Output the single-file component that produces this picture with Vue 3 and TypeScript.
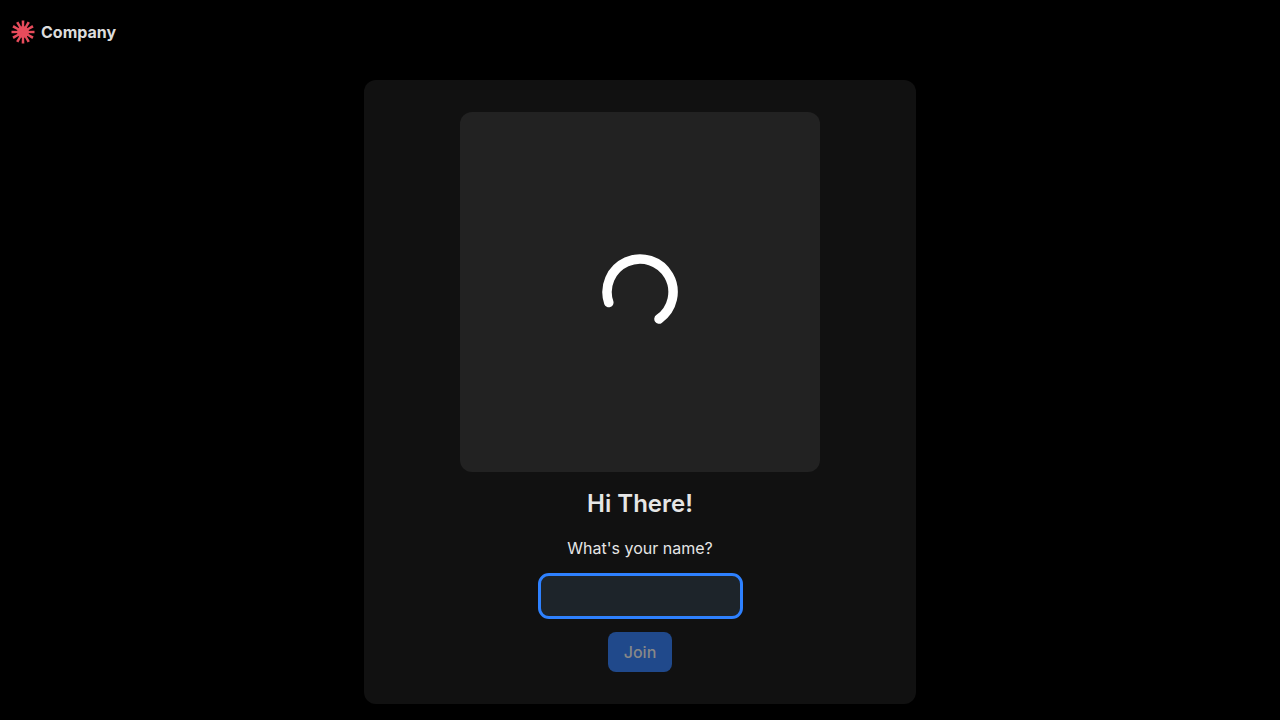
<script setup lang="ts">
import { computed, ref } from 'vue'

const name = ref('')
const canJoin = computed(() => name.value.trim().length > 0)
const spokes = Array.from({ length: 12 }, (_, i) => i * 30)
</script>

<template>
  <div class="page">
    <header class="topbar">
      <svg class="mark" viewBox="-12 -12 24 24" aria-hidden="true">
        <circle r="6" />
        <path
          v-for="angle in spokes"
          :key="angle"
          d="M-1 0 L-1.3 -11.5 H1.3 L1 0 Z"
          :transform="`rotate(${angle})`"
        />
      </svg>
      <span class="brand">Company</span>
    </header>

    <main class="content">
      <form class="card" @submit.prevent>
        <div class="preview" role="status" aria-live="polite">
          <svg class="spinner" viewBox="-40 -40 80 80" aria-hidden="true">
            <path d="M-31.2 10.6 A33 33 0 1 1 19 27" />
          </svg>
        </div>
        <h1>Hi There!</h1>
        <label for="name">What's your name?</label>
        <input id="name" v-model="name" type="text" autocomplete="off" />
        <button type="submit" :disabled="!canJoin">Join</button>
      </form>
    </main>
  </div>
</template>

<style>
html,
body {
  background: #000;
}
</style>

<style scoped>
.page {
  min-height: 100vh;
  box-sizing: border-box;
  background: #000;
  color: #e6e6e6;
  font-family: Inter, "Liberation Sans", sans-serif;
  font-size: 16px;
  line-height: 24px;
}

.topbar {
  display: flex;
  align-items: center;
  gap: 6px;
  height: 64px;
  padding: 0 11px;
}

.mark {
  width: 24px;
  height: 24px;
  fill: #e84c5c;
}

.brand {
  font-size: 16px;
  font-weight: 700;
  color: #dcdcdc;
}

.content {
  display: flex;
  justify-content: center;
  padding: 16px;
}

.card {
  display: flex;
  flex-direction: column;
  align-items: center;
  padding: 32px 96px;
  border-radius: 12px;
  background: #111;
}

.preview {
  display: flex;
  align-items: center;
  justify-content: center;
  width: 360px;
  max-width: 100%;
  aspect-ratio: 1;
  border-radius: 12px;
  background: #222;
}

.spinner {
  width: 80px;
  height: 80px;
  fill: none;
  stroke: #fff;
  stroke-width: 9.5;
  stroke-linecap: round;
}

h1 {
  margin: 16px 0;
  font-size: 24px;
  font-weight: 600;
  line-height: 32px;
}

label {
  margin-bottom: 16px;
}

input {
  box-sizing: border-box;
  width: 199px;
  height: 40px;
  margin-bottom: 16px;
  padding: 8px;
  border: 0;
  border-radius: 8px;
  outline: 3px solid #2e81ff;
  background: #1d242a;
  color: inherit;
  font: inherit;
}

button {
  height: 40px;
  padding: 0 16px;
  border: 0;
  border-radius: 8px;
  background: #2e81ff;
  color: #ededed;
  font: inherit;
  font-weight: 500;
  cursor: pointer;
}

button:disabled {
  background: #20498b;
  color: #888;
  cursor: default;
}
</style>
